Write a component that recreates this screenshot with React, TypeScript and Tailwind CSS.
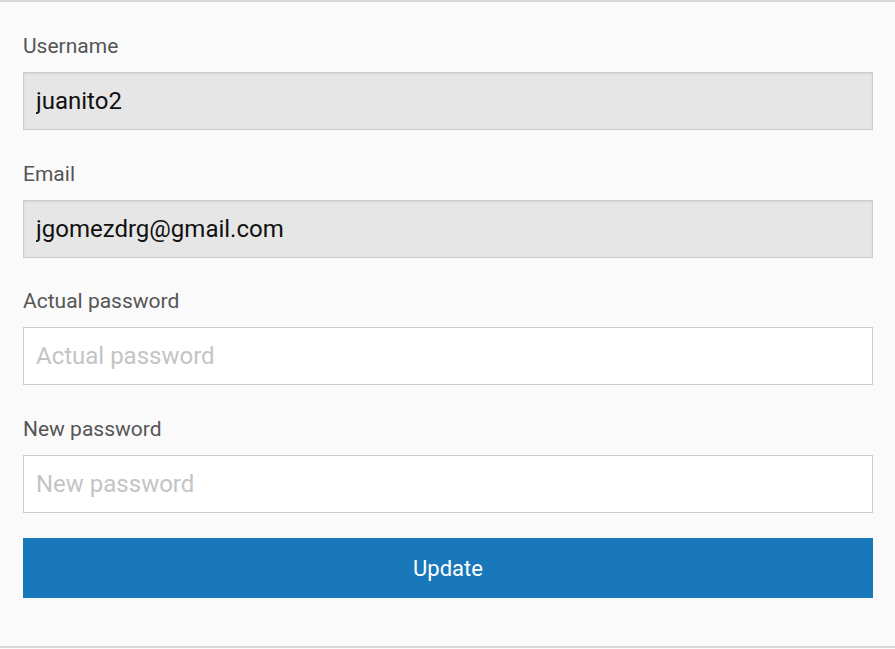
export default function App() {
  const font = { fontFamily: "Roboto, 'Noto Sans', sans-serif" };
  return (
    <div className="w-[895px] h-[649px] bg-[#fafafa]" style={font}>
      <div className="h-[648px] border-t-2 border-b-2 border-[#d6d6d6] px-[23px] pt-[32px] flex flex-col">
        <div className="flex flex-col gap-[31.7px]">
          <Field label="Username" value="juanito2" disabled />
          <Field label="Email" value="jgomezdrg@gmail.com" disabled />
          <Field label="Actual password" placeholder="Actual password" />
          <Field label="New password" placeholder="New password" />
        </div>
        <button className="mt-[25px] w-[850px] h-[60px] bg-[#1878b9] text-white text-[22px]">Update</button>
      </div>
    </div>
  );
}

function Field({ label, value, placeholder, disabled }: { label: string; value?: string; placeholder?: string; disabled?: boolean }) {
  return (
    <div className="flex flex-col">
      <label className="text-[21px] leading-[24px] text-[#555] mb-[14px]">{label}</label>
      <input
        readOnly
        defaultValue={value}
        placeholder={placeholder}
        disabled={disabled}
        className={`w-[850px] h-[58px] border border-[#cccccc] px-[12px] text-[24px] text-[#111] placeholder:text-[#c4c4c4] outline-none ${disabled ? "bg-[#e6e6e6] shadow-[inset_0_1px_2px_rgba(0,0,0,0.08)]" : "bg-white"}`}
        style={{ fontFamily: "Roboto, 'Noto Sans', sans-serif" }}
      />
    </div>
  );
}
